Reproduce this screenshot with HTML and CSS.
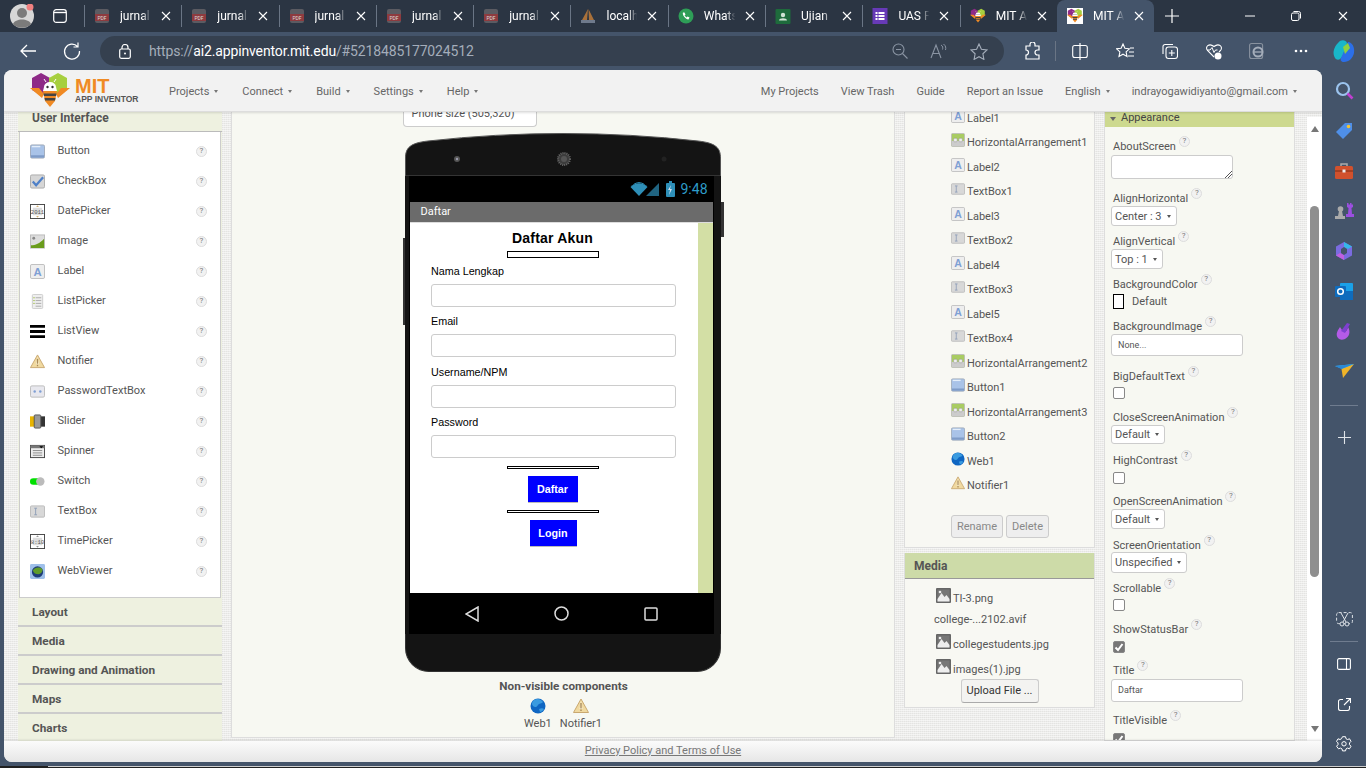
FILE: index.html
```html
<!DOCTYPE html>
<html lang="en">

<head>
    <meta charset="UTF-8">
    <title>MIT App Inventor</title>
    <link rel="stylesheet" href="styles.css">
</head>

<body>
    <svg class="defs" width="0" height="0">
        <defs>
            <symbol id="x" viewBox="0 0 10 10"><path d="M1 1l8 8M9 1l-8 8" fill="none" stroke="#fff" stroke-width="1.1"/></symbol>
            <symbol id="pdf" viewBox="0 0 14 16"><rect y="1" width="14" height="14" rx="2" fill="#5b5b62"/><rect y="6" width="14" height="7" fill="#8e3b3f"/><text x="7" y="12" font-size="5" fill="#ddd" text-anchor="middle" font-family="Roboto">PDF</text></symbol>
            <symbol id="hexlogo" viewBox="0 0 40 36">
                <path d="M11 0l9 5v12l-9 5-9-5V5z" fill="#8e2a87"/>
                <path d="M28 0l9 5v12l-9 5-9-5V5z" fill="#a7cf3f"/>
                <path d="M0 15h9l5 6-2 4zM40 15h-9l-5 6 2 4z" fill="#f08a24"/>
                <path d="M14 14a6 5 0 0 1 12 0l1 4H13z" fill="#fff"/>
                <circle cx="17.500" cy="14" r="1.200" fill="#333"/><circle cx="22.500" cy="14" r="1.200" fill="#333"/>
                <path d="M13 18h14l-2 10-5 6-5-6z" fill="#f08a24"/>
                <path d="M13.500 20.500h13l-.5 2.500h-12zM14.500 25h11l-.5 2.500h-10z" fill="#444"/>
                <path d="M16 9l-2-3M24 9l2-3" stroke="#fff" stroke-width="1"/>
            </symbol>
            <symbol id="i-button" viewBox="0 0 16 16"><rect x=".5" y="1" width="15" height="14" rx="1.500" fill="#a9c3e8" stroke="#9fa9b8"/><rect x="1" y="12" width="14" height="2.500" fill="#7f9cc8"/><rect x="2" y="2" width="9" height="1.500" fill="#e4eefa"/></symbol>
            <symbol id="i-check" viewBox="0 0 16 16"><rect x=".5" y="1" width="15" height="14" rx="1.500" fill="#d6d6d6" stroke="#aaa"/><path d="M3 8l3.500 4L14 3.500" fill="none" stroke="#4f80c8" stroke-width="2.400"/></symbol>
            <symbol id="i-date" viewBox="0 0 16 16"><rect x=".5" y=".5" width="15" height="15" fill="#fff" stroke="#444"/><rect x="3" y="4" width="10" height="8" fill="#ddd"/><text x="8" y="10.500" font-size="6" text-anchor="middle" fill="#555" font-family="Liberation Mono">2011</text><path d="M6.500 3L8 1.500 9.500 3zM6.500 13L8 14.500 9.500 13z" fill="#c89a4a"/></symbol>
            <symbol id="i-image" viewBox="0 0 16 16"><rect x=".5" y="1" width="15" height="14" fill="#ddd" stroke="#bbb"/><path d="M1 15v-3c5 0 9-2 14-7v10z" fill="#6a9c1c"/><circle cx="4" cy="4.500" r="1.500" fill="#888"/></symbol>
            <symbol id="i-label" viewBox="0 0 16 16"><rect x=".5" y=".5" width="15" height="15" rx="1.500" fill="#eee" stroke="#bbb"/><text x="8" y="12.500" font-size="12" font-weight="700" text-anchor="middle" fill="#7f9fd4" font-family="Liberation Sans">A</text></symbol>
            <symbol id="i-list" viewBox="0 0 16 16"><rect x="2.500" y=".5" width="11" height="15" rx="1" fill="#eee" stroke="#ccc"/><path d="M6 4h6M6 7h6M6 10h6M6 13h6" stroke="#aaa"/><path d="M3.500 4h1.500M3.500 7h1.500M3.500 10h1.500" stroke="#9bbb3a"/></symbol>
            <symbol id="i-listview" viewBox="0 0 16 16"><path d="M0 1h16v3H0zM0 6.500h16v3H0zM0 12h16v3H0z" fill="#000"/></symbol>
            <symbol id="i-notifier" viewBox="0 0 16 16"><path d="M8 1l7.500 13.500H.5z" fill="#f0d9a0" stroke="#c9a870"/><path d="M8 3l1.500 8h-3z" fill="#fff6dc"/><path d="M7.300 5h1.400v5.500H7.300zM7.300 11.500h1.400V13H7.300z" fill="#a88a58"/></symbol>
            <symbol id="i-pass" viewBox="0 0 16 16"><rect x=".5" y="2" width="15" height="12" rx="1.500" fill="#e8e8ee" stroke="#bbb"/><circle cx="5" cy="8" r="1.300" fill="#7f9fd4"/><circle cx="11" cy="8" r="1.300" fill="#7f9fd4"/></symbol>
            <symbol id="i-slider" viewBox="0 0 16 16"><rect y="2.500" width="6" height="11" fill="#e8b400"/><rect x="10" y="2.500" width="6" height="11" fill="#333"/><rect x="4.500" y="1" width="7" height="14" rx="1" fill="#999" stroke="#555"/></symbol>
            <symbol id="i-spinner" viewBox="0 0 16 16"><rect x=".5" y="1.500" width="15" height="13" fill="#eee" stroke="#444"/><path d="M.5 1.500h15v3H.5z" fill="#777"/><path d="M10 2.500h4L12 4.500z" fill="#000"/><path d="M3 7h10M3 9.500h10M3 12h10" stroke="#888"/></symbol>
            <symbol id="i-switch" viewBox="0 0 16 16"><rect y="4.500" width="12" height="7" rx="3.500" fill="#00e000"/><circle cx="11" cy="8" r="4.500" fill="#bbb"/></symbol>
            <symbol id="i-textbox" viewBox="0 0 16 16"><rect x=".5" y="2" width="15" height="12" rx="1" fill="#d8d8d8" stroke="#bbb"/><path d="M4.500 4.500h3M4.500 11.500h3M6 4.500v7" stroke="#8f9fb8"/></symbol>
            <symbol id="i-time" viewBox="0 0 16 16"><rect x=".5" y=".5" width="15" height="15" fill="#fff" stroke="#444"/><rect x="3" y="4" width="10" height="8" fill="#ddd"/><text x="8" y="10.500" font-size="6" text-anchor="middle" fill="#555" font-family="Liberation Mono">8:10</text><path d="M6.500 3L8 1.500 9.500 3zM6.500 13L8 14.500 9.500 13z" fill="#777"/></symbol>
            <symbol id="i-web" viewBox="0 0 16 16"><rect width="16" height="16" rx="1.500" fill="#9fc0ea"/><circle cx="8" cy="8.500" r="6" fill="#1f3d7a"/><path d="M3 7c2-4 7-4 10-2 1 3-1 5-4 6-3 0-5-1-6-4z" fill="#5e9c2a"/></symbol>
            <symbol id="i-arr" viewBox="0 0 16 16"><rect x=".5" y=".5" width="15" height="15" rx="1.500" fill="#a9cc62" stroke="#bbb"/><rect x="1" y="9" width="14" height="6" fill="#ccc"/><rect x="3" y="6" width="4" height="4" rx="1" fill="#eee" stroke="#888" stroke-width=".5"/><rect x="9" y="6" width="4" height="4" rx="1" fill="#eee" stroke="#888" stroke-width=".5"/></symbol>
            <symbol id="i-globe" viewBox="0 0 16 16"><circle cx="8" cy="8" r="7.500" fill="#0f66c2"/><path d="M4 2c3-2 7-1 9 2-1 2-4 1-5 3s-3 3-5 1-1-4 1-6z" fill="#3a9be0"/><path d="M9 11c2-1 4-1 5 0-1 2-3 3-4 3z" fill="#3a9be0"/></symbol>
            <symbol id="i-media" viewBox="0 0 15 15"><rect width="15" height="15" rx="1" fill="#666"/><rect x="1.500" y="1.500" width="12" height="12" fill="#777"/><path d="M1.500 11l4-6 3 4 2-2 3 4v2.500h-12z" fill="#eee"/><circle cx="4" cy="4" r="1.300" fill="#eee"/></symbol>
        </defs>
    </svg>

    <div class="tabstrip">
        <div class="strip-left">
            <svg class="avatar" width="24" height="24" viewBox="0 0 24 24"><circle cx="12" cy="12" r="12" fill="#d7d7d7"/><circle cx="12" cy="9" r="5" fill="#7b7b7b"/><path d="M3 20c2-6 16-6 18 0-4 5-14 5-18 0z" fill="#7b7b7b"/><circle cx="20" cy="3" r="3.500" fill="#f08080"/></svg>
            <svg class="tabs-icon" width="14" height="14" viewBox="0 0 14 14"><rect x=".7" y=".7" width="12.600" height="12.600" rx="2.500" fill="none" stroke="#fff" stroke-width="1.200"/><path d="M.7 3.500h12.600" stroke="#fff" stroke-width="1.400"/></svg>
        </div>
        <div class="tab"><svg class="tab-fav" width="14" height="16"><use href="#pdf"/></svg><span class="tab-text">jurnal</span><svg class="tab-x" width="10" height="10"><use href="#x"/></svg></div>
        <div class="tab"><svg class="tab-fav" width="14" height="16"><use href="#pdf"/></svg><span class="tab-text">jurnal</span><svg class="tab-x" width="10" height="10"><use href="#x"/></svg></div>
        <div class="tab"><svg class="tab-fav" width="14" height="16"><use href="#pdf"/></svg><span class="tab-text">jurnal</span><svg class="tab-x" width="10" height="10"><use href="#x"/></svg></div>
        <div class="tab"><svg class="tab-fav" width="14" height="16"><use href="#pdf"/></svg><span class="tab-text">jurnal</span><svg class="tab-x" width="10" height="10"><use href="#x"/></svg></div>
        <div class="tab"><svg class="tab-fav" width="14" height="16"><use href="#pdf"/></svg><span class="tab-text">jurnal</span><svg class="tab-x" width="10" height="10"><use href="#x"/></svg></div>
        <div class="tab"><svg class="tab-fav" width="14" height="16" viewBox="0 0 14 16"><path d="M7 1L1 12h5zM7.500 1L13 12H8z" fill="#a8703a"/><path d="M0 12h14v3H0z" fill="#6f7a8c"/></svg><span class="tab-text">localh</span><svg class="tab-x" width="10" height="10"><use href="#x"/></svg></div>
        <div class="tab"><svg class="tab-fav" width="16" height="16" viewBox="0 0 16 16"><circle cx="8" cy="8" r="7.500" fill="#2e9e57"/><path d="M5 4.500c-1 2 2 6.500 5.500 7l1-2-2-1-1 1-2-2 1-1-1-2z" fill="#fff"/></svg><span class="tab-text">Whats</span><svg class="tab-x" width="10" height="10"><use href="#x"/></svg></div>
        <div class="tab"><svg class="tab-fav" width="15" height="15" viewBox="0 0 15 15"><rect width="15" height="15" rx="1" fill="#1e6b3c"/><circle cx="7.500" cy="6" r="2.200" fill="#cfe3d4"/><path d="M3.500 11.500c0-3 8-3 8 0z" fill="#cfe3d4"/></svg><span class="tab-text">Ujian</span><svg class="tab-x" width="10" height="10"><use href="#x"/></svg></div>
        <div class="tab"><svg class="tab-fav" width="15" height="16" viewBox="0 0 15 16"><rect width="15" height="16" fill="#673ab7"/><path d="M3 4h2v2H3zM6 4h6v2H6zM3 7h2v2H3zM6 7h6v2H6zM3 10h2v2H3zM6 10h6v2H6z" fill="#fff"/></svg><span class="tab-text">UAS P</span><svg class="tab-x" width="10" height="10"><use href="#x"/></svg></div>
        <div class="tab"><svg class="tab-fav" width="16" height="16"><use href="#hexlogo"/></svg><span class="tab-text">MIT A</span><svg class="tab-x" width="10" height="10"><use href="#x"/></svg></div>
        <div class="tab tab-active"><svg class="tab-fav" width="16" height="16"><rect width="16" height="16" fill="#fff"/><use href="#hexlogo"/></svg><span class="tab-text">MIT A</span><svg class="tab-x" width="10" height="10"><use href="#x"/></svg></div>
        <svg class="tab-plus" width="14" height="14" viewBox="0 0 14 14"><path d="M7 0v14M0 7h14" stroke="#fff" stroke-width="1.200"/></svg>
        <div class="win-controls">
            <div class="win-btn"><svg width="10" height="10" viewBox="0 0 10 10"><path d="M0 5h10" stroke="#fff"/></svg></div>
            <div class="win-btn"><svg width="10" height="10" viewBox="0 0 10 10"><rect x=".5" y="2" width="7.500" height="7.500" rx="1.500" fill="none" stroke="#fff"/><path d="M2.500.5h5a2 2 0 0 1 2 2v5" fill="none" stroke="#fff"/></svg></div>
            <div class="win-btn"><svg width="10" height="10"><use href="#x"/></svg></div>
        </div>
    </div>

    <div class="toolbar">
        <svg class="tool-nav" width="20" height="20" viewBox="0 0 20 20"><path d="M18 10H3M9 4l-6 6 6 6" fill="none" stroke="#fff" stroke-width="1.300"/></svg>
        <svg class="tool-nav tool-reload" width="20" height="20" viewBox="0 0 20 20"><path d="M15.500 5.500A7.500 7.500 0 1 0 17.500 10M16 1.500v4.500h-4.500" fill="none" stroke="#fff" stroke-width="1.200"/></svg>
        <div class="address">
            <svg class="lock" width="12" height="15" viewBox="0 0 12 15"><rect x=".7" y="5" width="10.600" height="9.300" rx="1.500" fill="none" stroke="#fff" stroke-width="1.200"/><path d="M3 5V3.500a3 3 0 0 1 6 0V5" fill="none" stroke="#fff" stroke-width="1.200"/><circle cx="6" cy="9.500" r="1" fill="#fff"/></svg>
            <span class="url"><span class="url-dim">https://</span>ai2.appinventor.mit.edu<span class="url-dim">/#5218485177024512</span></span>
            <div class="address-icons">
                <svg width="16" height="16" viewBox="0 0 16 16"><circle cx="6.500" cy="6.500" r="5.500" fill="none" stroke="#8a94a3" stroke-width="1.100"/><path d="M4 6.500h5M10.500 10.500l5 5" stroke="#8a94a3" stroke-width="1.100"/></svg>
                <svg width="18" height="16" viewBox="0 0 18 16"><path d="M1 15L6 2l5 13M3 10.500h6" fill="none" stroke="#8a94a3" stroke-width="1.100"/><path d="M11 2c2 1 2 3 1.500 4.500M13.500 1c2.500 2 2.500 4 2 6" fill="none" stroke="#8a94a3"/></svg>
                <svg width="18" height="17" viewBox="0 0 18 17"><path d="M9 1l2.400 5.200 5.600.7-4.100 3.900 1 5.600L9 13.700l-4.900 2.700 1-5.600L1 6.900l5.600-.7z" fill="none" stroke="#a4adba" stroke-width="1.100"/></svg>
            </div>
        </div>
        <div class="tool-slot tool-first"><svg width="17" height="18" viewBox="0 0 17 18"><path d="M6 2.500a2.500 2.500 0 0 1 5 0V4h4v4h-1.500a2.500 2.500 0 0 0 0 5H15v4H2v-4a2.500 2.500 0 0 0 0-5V4h4z" fill="none" stroke="#fff" stroke-width="1.200"/></svg></div>
        <div class="tool-sep"></div>
        <div class="tool-slot tool-wide"><svg width="16" height="17" viewBox="0 0 16 17"><rect x=".7" y="2.500" width="14.600" height="12" rx="2" fill="none" stroke="#fff" stroke-width="1.100"/><path d="M8 0v17" stroke="#fff" stroke-width="1.200"/></svg></div>
        <div class="tool-slot tool-wide"><svg width="18" height="17" viewBox="0 0 18 17"><path d="M7 1l1.900 4.200 4.500.6-3.300 3.100.9 4.600L7 11.200l-4 2.300.9-4.600L.6 5.800l4.500-.6z" fill="none" stroke="#fff" stroke-width="1.100"/><path d="M14 5h4M13 9h5M12 13h6" stroke="#fff"/></svg></div>
        <div class="tool-slot tool-wide"><svg width="16" height="18" viewBox="0 0 16 18"><rect x="4" y="5" width="11.500" height="11.500" rx="2.500" fill="none" stroke="#fff" stroke-width="1.100"/><path d="M9.800 8v6M6.800 11h6M11 2.500H3a2 2 0 0 0-2 2V12" fill="none" stroke="#fff" stroke-width="1.100"/></svg></div>
        <div class="tool-slot tool-narrow"><svg width="18" height="18" viewBox="0 0 18 18"><path d="M9 15L2.500 8.500C-.5 5 4 .5 9 4.500c5-4 9.500.5 6.500 4L14 10" fill="none" stroke="#fff" stroke-width="1.100"/><path d="M2 8h3l2-2.500 2 5 1.500-2.500h2" fill="none" stroke="#fff"/><circle cx="13" cy="14" r="3.500" fill="#fff"/></svg></div>
        <div class="tool-slot"><svg width="16" height="18" viewBox="0 0 16 18"><rect x=".6" y="1.500" width="13" height="15" rx="2" fill="none" stroke="#88929f" stroke-width="1.100"/><circle cx="9" cy="10" r="4.500" fill="none" stroke="#a4adba" stroke-width="2"/><path d="M5 10h8" stroke="#a4adba" stroke-width="1.300"/></svg></div>
        <div class="tool-slot tool-narrow"><svg width="14" height="4" viewBox="0 0 14 4"><circle cx="2" cy="2" r="1.300" fill="#fff"/><circle cx="7" cy="2" r="1.300" fill="#fff"/><circle cx="12" cy="2" r="1.300" fill="#fff"/></svg></div>
        <div class="tool-slot"><svg width="24" height="24" viewBox="0 0 24 24"><path d="M6 4c3-4 8-3 9 0l-4 12c-2 5-6 6-8 3-3-5-1-11 3-15z" fill="#19b6c9"/><path d="M16 3c4 0 7 5 6 11-1 5-5 9-10 9-3 0-4-2-3-4z" fill="#2c6fe8"/><path d="M11 8l5-4 2 5-5 6z" fill="#8fd13f"/></svg></div>
    </div>

    <div class="main">
        <div class="page">
            <header class="appbar">
                <div class="logo">
                    <svg class="logo-mark" width="40" height="36"><use href="#hexlogo"/></svg>
                    <div class="logo-text">
                        <div class="logo-mit">MIT</div>
                        <div class="logo-sub">APP INVENTOR</div>
                    </div>
                </div>
                <nav class="nav">
                    <span class="nav-item nav-menu">Projects</span>
                    <span class="nav-item nav-menu">Connect</span>
                    <span class="nav-item nav-menu">Build</span>
                    <span class="nav-item nav-menu">Settings</span>
                    <span class="nav-item nav-menu">Help</span>
                </nav>
                <nav class="nav nav-right">
                    <span class="nav-item">My Projects</span>
                    <span class="nav-item">View Trash</span>
                    <span class="nav-item">Guide</span>
                    <span class="nav-item">Report an Issue</span>
                    <span class="nav-item nav-menu">English</span>
                    <span class="nav-item nav-menu">indrayogawidiyanto@gmail.com</span>
                </nav>
            </header>

            <div class="workspace">
                <section class="palette">
                    <div class="palette-head">User Interface</div>
                    <ul class="palette-list">
                        <li><svg class="pal-icon"><use href="#i-button"/></svg><span class="pal-name">Button</span><span class="pal-help">?</span></li>
                        <li><svg class="pal-icon"><use href="#i-check"/></svg><span class="pal-name">CheckBox</span><span class="pal-help">?</span></li>
                        <li><svg class="pal-icon"><use href="#i-date"/></svg><span class="pal-name">DatePicker</span><span class="pal-help">?</span></li>
                        <li><svg class="pal-icon"><use href="#i-image"/></svg><span class="pal-name">Image</span><span class="pal-help">?</span></li>
                        <li><svg class="pal-icon"><use href="#i-label"/></svg><span class="pal-name">Label</span><span class="pal-help">?</span></li>
                        <li><svg class="pal-icon"><use href="#i-list"/></svg><span class="pal-name">ListPicker</span><span class="pal-help">?</span></li>
                        <li><svg class="pal-icon"><use href="#i-listview"/></svg><span class="pal-name">ListView</span><span class="pal-help">?</span></li>
                        <li><svg class="pal-icon"><use href="#i-notifier"/></svg><span class="pal-name">Notifier</span><span class="pal-help">?</span></li>
                        <li><svg class="pal-icon"><use href="#i-pass"/></svg><span class="pal-name">PasswordTextBox</span><span class="pal-help">?</span></li>
                        <li><svg class="pal-icon"><use href="#i-slider"/></svg><span class="pal-name">Slider</span><span class="pal-help">?</span></li>
                        <li><svg class="pal-icon"><use href="#i-spinner"/></svg><span class="pal-name">Spinner</span><span class="pal-help">?</span></li>
                        <li><svg class="pal-icon"><use href="#i-switch"/></svg><span class="pal-name">Switch</span><span class="pal-help">?</span></li>
                        <li><svg class="pal-icon"><use href="#i-textbox"/></svg><span class="pal-name">TextBox</span><span class="pal-help">?</span></li>
                        <li><svg class="pal-icon"><use href="#i-time"/></svg><span class="pal-name">TimePicker</span><span class="pal-help">?</span></li>
                        <li><svg class="pal-icon"><use href="#i-web"/></svg><span class="pal-name">WebViewer</span><span class="pal-help">?</span></li>
                    </ul>
                    <div class="pal-cat">Layout</div>
                    <div class="pal-cat">Media</div>
                    <div class="pal-cat">Drawing and Animation</div>
                    <div class="pal-cat">Maps</div>
                    <div class="pal-cat">Charts</div>
                </section>

                <section class="viewer">
                    <div class="viewer-inner">
                        <div class="size-box"><span class="size-text">Phone size (505,320)</span></div>
                        <div class="phone">
                            <svg class="phone-top" width="316" height="43" viewBox="0 0 316 43">
                                <path d="M.5 43V25C.5 15 5 10 23 8 Q90 .5 158 .5 Q226 .5 293 8C311 10 315.500 15 315.500 25V43z" fill="#141414" stroke="#555"/>
                                <circle cx="52" cy="26" r="3" fill="#555"/><circle cx="52" cy="26" r="1.200" fill="#99a"/>
                                <circle cx="159" cy="26" r="6" fill="#3c3c3c" stroke="#666" stroke-width="2" stroke-dasharray="1 1"/>
                                <circle cx="159" cy="26" r="3" fill="#555"/>
                                <circle cx="259" cy="26" r="2.500" fill="#222"/>
                            </svg>
                            <div class="phone-status">
                                <svg width="45" height="16" viewBox="0 0 45 16">
                                    <path d="M9 15L.5 6c5-5 12-5 17 0z" fill="#2e8fb8"/>
                                    <path d="M3.500 3.500c4-2.500 7-2.500 11 0" fill="none" stroke="#2e8fb8"/>
                                    <path d="M16 15L29 2v13z" fill="#2e8fb8" opacity=".7"/>
                                    <rect x="36" y="2" width="9" height="14" rx="1" fill="#2e8fb8"/><rect x="39" y="0" width="3" height="2" fill="#2e8fb8"/>
                                    <path d="M41 4l-3 5h2l-1 5 3-6h-2z" fill="#cde"/>
                                </svg>
                                <span class="phone-time">9:48</span>
                            </div>
                            <div class="phone-screen">
                                <div class="phone-title">Daftar</div>
                                <div class="phone-body">
                                    <div class="form">
                                        <div class="form-heading">Daftar Akun</div>
                                        <div class="form-rule form-rule-tall"></div>
                                        <div class="form-label form-label-first">Nama Lengkap</div>
                                        <div class="form-input"></div>
                                        <div class="form-label">Email</div>
                                        <div class="form-input"></div>
                                        <div class="form-label form-label-wide">Username/NPM</div>
                                        <div class="form-input"></div>
                                        <div class="form-label">Password</div>
                                        <div class="form-input"></div>
                                        <div class="form-rule form-rule-first"></div>
                                        <div class="form-btn form-btn-daftar">Daftar</div>
                                        <div class="form-rule"></div>
                                        <div class="form-btn form-btn-login">Login</div>
                                    </div>
                                    <div class="phone-edge"></div>
                                </div>
                                <div class="phone-nav">
                                    <svg width="14" height="16" viewBox="0 0 14 16"><path d="M13 1v14L1 8z" fill="none" stroke="#ddd" stroke-width="1.500"/></svg>
                                    <svg width="15" height="15" viewBox="0 0 15 15"><circle cx="7.500" cy="7.500" r="6.500" fill="none" stroke="#ddd" stroke-width="1.500"/></svg>
                                    <svg width="14" height="14" viewBox="0 0 14 14"><rect x="1" y="1" width="12" height="12" rx="1" fill="none" stroke="#ddd" stroke-width="1.500"/></svg>
                                </div>
                            </div>
                            <div class="phone-chin"></div>
                        </div>
                        <div class="nonvisible-title">Non-visible components</div>
                        <div class="nonvisible">
                            <div class="nv-item"><svg width="16" height="16"><use href="#i-globe"/></svg><span>Web1</span></div>
                            <div class="nv-item"><svg width="16" height="16"><use href="#i-notifier"/></svg><span>Notifier1</span></div>
                        </div>
                    </div>
                </section>

                <div class="tree-col">
                    <section class="tree">
                        <ul class="tree-list">
                            <li><svg class="tree-icon"><use href="#i-label"/></svg>Label1</li>
                            <li><svg class="tree-icon"><use href="#i-arr"/></svg>HorizontalArrangement1</li>
                            <li><svg class="tree-icon"><use href="#i-label"/></svg>Label2</li>
                            <li><svg class="tree-icon"><use href="#i-textbox"/></svg>TextBox1</li>
                            <li><svg class="tree-icon"><use href="#i-label"/></svg>Label3</li>
                            <li><svg class="tree-icon"><use href="#i-textbox"/></svg>TextBox2</li>
                            <li><svg class="tree-icon"><use href="#i-label"/></svg>Label4</li>
                            <li><svg class="tree-icon"><use href="#i-textbox"/></svg>TextBox3</li>
                            <li><svg class="tree-icon"><use href="#i-label"/></svg>Label5</li>
                            <li><svg class="tree-icon"><use href="#i-textbox"/></svg>TextBox4</li>
                            <li><svg class="tree-icon"><use href="#i-arr"/></svg>HorizontalArrangement2</li>
                            <li><svg class="tree-icon"><use href="#i-button"/></svg>Button1</li>
                            <li><svg class="tree-icon"><use href="#i-arr"/></svg>HorizontalArrangement3</li>
                            <li><svg class="tree-icon"><use href="#i-button"/></svg>Button2</li>
                            <li><svg class="tree-icon"><use href="#i-globe"/></svg>Web1</li>
                            <li><svg class="tree-icon"><use href="#i-notifier"/></svg>Notifier1</li>
                        </ul>
                        <div class="tree-actions">
                            <span class="tree-btn tree-btn-rename">Rename</span>
                            <span class="tree-btn tree-btn-delete">Delete</span>
                        </div>
                    </section>
                    <section class="media">
                        <div class="media-head">Media</div>
                        <div class="media-row media-row-first"><svg class="media-icon"><use href="#i-media"/></svg>TI-3.png</div>
                        <div class="media-row media-row-plain">college-...2102.avif</div>
                        <div class="media-row"><svg class="media-icon"><use href="#i-media"/></svg>collegestudents.jpg</div>
                        <div class="media-row"><svg class="media-icon"><use href="#i-media"/></svg>images(1).jpg</div>
                        <div class="upload-btn">Upload File ...</div>
                    </section>
                </div>

                <section class="props">
                    <div class="props-head"><span class="props-caret"></span><span class="props-title">Appearance</span></div>
                    <div class="prop h52 prop-top"><div class="prop-label">AboutScreen<i class="help">?</i></div><div class="textarea"><svg width="8" height="8" viewBox="0 0 8 8"><path d="M1 8l7-7M4 8l4-4" stroke="#555"/></svg></div></div>
                    <div class="prop h43"><div class="prop-label">AlignHorizontal<i class="help">?</i></div><div class="select">Center : 3</div></div>
                    <div class="prop h43"><div class="prop-label">AlignVertical<i class="help">?</i></div><div class="select">Top : 1</div></div>
                    <div class="prop h42"><div class="prop-label">BackgroundColor<i class="help">?</i></div><div class="color-row"><span class="swatch"></span>Default</div></div>
                    <div class="prop h50"><div class="prop-label">BackgroundImage<i class="help">?</i></div><div class="textinput textinput-none">None...</div></div>
                    <div class="prop h41"><div class="prop-label">BigDefaultText<i class="help">?</i></div><div class="check"></div></div>
                    <div class="prop h43"><div class="prop-label">CloseScreenAnimation<i class="help">?</i></div><div class="select select-short">Default</div></div>
                    <div class="prop h41"><div class="prop-label">HighContrast<i class="help">?</i></div><div class="check check-low"></div></div>
                    <div class="prop h44"><div class="prop-label">OpenScreenAnimation<i class="help">?</i></div><div class="select">Default</div></div>
                    <div class="prop h43"><div class="prop-label">ScreenOrientation<i class="help">?</i></div><div class="select select-tight">Unspecified</div></div>
                    <div class="prop h41"><div class="prop-label">Scrollable<i class="help">?</i></div><div class="check"></div></div>
                    <div class="prop h41"><div class="prop-label">ShowStatusBar<i class="help">?</i></div><div class="check check-low check-on"><svg width="10" height="10" viewBox="0 0 10 10"><path d="M1.500 5.500l2.500 2.500 4.500-6" fill="none" stroke="#fff" stroke-width="2"/></svg></div></div>
                    <div class="prop h50"><div class="prop-label">Title<i class="help">?</i></div><div class="textinput textinput-title">Daftar</div></div>
                    <div class="prop h50"><div class="prop-label">TitleVisible<i class="help">?</i></div><div class="check check-low2 check-on"><svg width="10" height="10" viewBox="0 0 10 10"><path d="M1.500 5.500l2.500 2.500 4.500-6" fill="none" stroke="#fff" stroke-width="2"/></svg></div></div>
                </section>

                <div class="scrollbar">
                    <span class="scroll-up"></span>
                    <span class="scroll-thumb"></span>
                    <span class="scroll-down"></span>
                </div>
            </div>

            <footer class="foot"><a class="foot-link" href="#">Privacy Policy and Terms of Use</a></footer>
        </div>

        <aside class="sidebar">
            <div class="side-slot"><svg width="19" height="20" viewBox="0 0 19 20"><circle cx="8" cy="8" r="6" fill="none" stroke="#9cc4ee" stroke-width="2.200"/><path d="M12.500 12.500l5 5" stroke="#c03fd0" stroke-width="2.600"/></svg></div>
            <div class="side-slot"><svg width="18" height="18" viewBox="0 0 18 18"><path d="M1 10L10 1h7v7l-9 9z" fill="#4f8fe8"/><circle cx="13.500" cy="4.500" r="1.800" fill="#f4c430"/></svg></div>
            <div class="side-slot"><svg width="18" height="16" viewBox="0 0 18 16"><path d="M6 3V1h6v2" fill="none" stroke="#aaa" stroke-width="1.500"/><rect y="3" width="18" height="13" rx="1.500" fill="#d1512d"/><path d="M0 8h18" stroke="#7d2e17"/><rect x="7.500" y="6.500" width="3" height="3" fill="#eee"/></svg></div>
            <div class="side-slot"><svg width="19" height="18" viewBox="0 0 19 18"><path d="M12 1h1.500v1.500h1.500V1h1.500v1.500H18V1v4l-1.500 1 .5 6h2v3h-8v-3h2l.5-6L12 5z" fill="#9b4fe0"/><circle cx="5.500" cy="7" r="2.800" fill="#aaa"/><path d="M4 9h3l1 5h2v3H0v-3h3z" fill="#aaa"/></svg></div>
            <div class="side-slot"><svg width="18" height="18" viewBox="0 0 18 18"><path d="M9 0l8 4.500v9L9 18l-8-4.500v-9z" fill="#7a6be0"/><path d="M9 0l8 4.500-4 2.500-4-2z" fill="#35b6e8"/><path d="M1 13.500L5 11l4 2 0 5z" fill="#c05fe0"/><path d="M6 7l3-2 3 2v4l-3 2-3-2z" fill="#44546a"/></svg></div>
            <div class="side-slot"><svg width="18" height="17" viewBox="0 0 18 17"><rect x="5" y="0" width="13" height="17" rx="1" fill="#1aa1e8"/><rect x="5" y="8" width="13" height="9" fill="#0f6cbd"/><rect x="0" y="3" width="11" height="11" rx="1" fill="#0f6cbd"/><circle cx="5.500" cy="8.500" r="2.800" fill="none" stroke="#fff" stroke-width="1.500"/></svg></div>
            <div class="side-slot"><svg width="18" height="18" viewBox="0 0 18 18"><path d="M3 16C0 12 3 8 5 5l2 3c2 3 5 2 6-3 3 5 1 10-3 12-3 1-5 1-7-1z" fill="#b45be8"/><path d="M6 9l6-8 3 1-5 9z" fill="#7e3fd0"/></svg></div>
            <div class="side-slot"><svg width="19" height="14" viewBox="0 0 19 14"><path d="M0 2l19-2-9 6z" fill="#3fb7e8"/><path d="M19 0L8 14 6.500 5z" fill="#f0b429"/><path d="M0 2l6.500 3L19 0z" fill="#2a88d8"/></svg></div>
            <div class="side-sep side-sep-top"></div>
            <div class="side-slot"><svg width="13" height="13" viewBox="0 0 13 13"><path d="M6.500 0v13M0 6.500h13" stroke="#dfe3e8" stroke-width="1.100"/></svg></div>
            <div class="side-fill"></div>
            <div class="side-slot"><svg width="17" height="15" viewBox="0 0 17 15"><rect x=".6" y=".6" width="15.800" height="11" rx="2" fill="none" stroke="#dfe3e8" stroke-dasharray="3 2"/><path d="M5 1l5 9M12 1l-5 9" stroke="#dfe3e8"/><circle cx="6" cy="12" r="2" fill="#44546a" stroke="#dfe3e8"/><circle cx="11" cy="12" r="2" fill="#44546a" stroke="#dfe3e8"/></svg></div>
            <div class="side-sep"></div>
            <div class="side-slot"><svg width="14" height="12" viewBox="0 0 14 12"><rect x=".6" y=".6" width="12.800" height="10.800" rx="1.500" fill="none" stroke="#fff" stroke-width="1.100"/><path d="M9.500 1v10" stroke="#fff" stroke-width="1.100"/></svg></div>
            <div class="side-slot"><svg width="13" height="13" viewBox="0 0 13 13"><path d="M5 1.500H2.500a2 2 0 0 0-2 2v7a2 2 0 0 0 2 2h7a2 2 0 0 0 2-2V8M6 7l6.500-6.500M8 .5h4.500V5" fill="none" stroke="#fff" stroke-width="1.100"/></svg></div>
            <div class="side-slot"><svg width="16" height="16" viewBox="0 0 16 16"><path d="M6.500.7h3l.5 2 1.500.8 2-.7 1.500 2.600-1.500 1.500v1.800l1.500 1.500-1.500 2.600-2-.7-1.500.8-.5 2h-3l-.5-2-1.500-.8-2 .7L.5 10.200 2 8.700V6.900L.5 5.400 2 2.800l2 .7 1.500-.8z" fill="none" stroke="#fff" stroke-width="1"/><circle cx="8" cy="7.800" r="2.200" fill="none" stroke="#fff"/></svg></div>
        </aside>
    </div>
    <div class="taskbar"><span class="taskbar-lit"></span></div>
</body>

</html>
```

FILE: styles.css
```css
/* reset start */
* {
    padding: 0;
    margin: 0;
    box-sizing: border-box;
}

html,
body {
    width: 1366px;
    height: 768px;
    overflow: hidden;
}

body {
    background-color: #44546a;
    font-family: Roboto, "Liberation Sans", sans-serif;
    font-size: 11px;
    color: #555;
}

li {
    list-style: none;
}

svg {
    display: block;
    flex: none;
}

.defs {
    position: absolute;
}

/* reset end */


/* browser tabs */
.tabstrip {
    height: 32px;
    background-color: #2b3543;
    display: flex;
    align-items: center;
}

.strip-left {
    width: 84px;
    height: 32px;
    display: flex;
    align-items: center;
    padding-left: 10px;
}

.tabs-icon {
    margin-left: 19px;
}

.tab {
    width: 97.3px;
    height: 32px;
    display: flex;
    align-items: center;
    padding-left: 10px;
    color: #fff;
    font-size: 12px;
    background-image: linear-gradient(#6a7585, #6a7585);
    background-size: 1px 22px;
    background-position: 0 5px;
    background-repeat: no-repeat;
}

.tab-fav {
    width: 16px;
}

.tab-text {
    width: 34px;
    margin-left: 10px;
    white-space: nowrap;
    -webkit-mask-image: linear-gradient(90deg, #000 65%, transparent 92%);
    mask-image: linear-gradient(90deg, #000 65%, transparent 92%);
}

.tab-x {
    margin-left: 7px;
}

.tab-active {
    background-image: none;
    background-color: #44546a;
    border-radius: 8px 8px 0 0;
}

.tab-plus {
    margin-left: 11px;
}

.win-controls {
    margin-left: auto;
    display: flex;
}

.win-btn {
    width: 46.5px;
    height: 32px;
    display: flex;
    align-items: center;
    justify-content: center;
}

/* browser toolbar */
.toolbar {
    height: 38px;
    display: flex;
    align-items: center;
    padding-left: 18px;
    background-color: #44546a;
}

.tool-reload {
    margin-left: 24px;
}

.address {
    width: 905px;
    height: 30px;
    margin-left: 18px;
    border-radius: 15px;
    background-color: #35404f;
    display: flex;
    align-items: center;
    padding-left: 19px;
}

.url {
    margin-left: 18px;
    font-size: 14px;
    color: #fff;
    letter-spacing: -.01em;
}

.url-dim {
    color: #a4adba;
}

.address-icons {
    margin-left: auto;
    width: 96px;
    margin-right: 16px;
    display: flex;
    justify-content: space-between;
    align-items: center;
}

.tool-slot {
    width: 44px;
    height: 30px;
    display: flex;
    align-items: center;
    justify-content: center;
}

.tool-first {
    margin-left: 6px;
}

.tool-wide {
    width: 45px;
}

.tool-narrow {
    width: 43px;
}

.tool-sep {
    width: 1px;
    height: 20px;
    margin: 0 1px;
    background-color: #6a7585;
}

/* page */
.main {
    height: 696px;
    display: flex;
}

.page {
    width: 1318px;
    height: 692px;
    margin-left: 4px;
    display: flex;
    flex-direction: column;
    border-radius: 8px;
    overflow: hidden;
    background-color: #ececea;
    background-image: linear-gradient(rgba(255, 255, 255, .5) 1px, transparent 1px), linear-gradient(90deg, rgba(0, 0, 0, .035) 1px, transparent 1px);
    background-size: 2px 2px;
}

.appbar {
    height: 42px;
    flex: none;
    display: flex;
    align-items: center;
    padding-top: 1px;
    padding-right: 25px;
    background-color: #f2f2f2;
    border-bottom: 1px solid #ddd;
    position: relative;
    z-index: 2;
    box-shadow: 0 1px 2px rgba(0, 0, 0, .12);
}

.logo {
    width: 165px;
    padding-left: 26px;
    display: flex;
    align-items: center;
    flex: none;
}

.logo-text {
    margin-left: 5px;
    margin-top: -1px;
}

.logo-mit {
    font-family: "Liberation Sans", sans-serif;
    font-size: 20px;
    line-height: 16px;
    font-weight: 700;
    color: #f08a24;
}

.logo-sub {
    font-family: "Liberation Sans", sans-serif;
    font-size: 8.5px;
    line-height: 10px;
    font-weight: 700;
    color: #555;
    white-space: nowrap;
}

.nav {
    display: flex;
    gap: 24px;
    color: #666;
    white-space: nowrap;
}

.nav-right {
    margin-left: auto;
    gap: 22px;
}

.nav-menu::after {
    content: "";
    display: inline-block;
    margin-left: 5px;
    vertical-align: 2px;
    border-top: 3px solid #777;
    border-left: 2px solid transparent;
    border-right: 2px solid transparent;
}

.workspace {
    flex: 1;
    min-height: 0;
    display: grid;
    grid-template-columns: 204px 664px 191px 191px 1fr;
    column-gap: 9px;
    padding-left: 14px;
    overflow: hidden;
}

/* palette */
.palette {
    background-color: #eef1e0;
    overflow: hidden;
}

.palette-head {
    height: 20px;
    padding-left: 14px;
    font-size: 12px;
    line-height: 13px;
    font-weight: 700;
    border-bottom: 1px solid #bbb;
}

.palette-list {
    height: 466px;
    padding-top: 4px;
    background-color: #fff;
    border: 1px solid #ccc;
    border-top: none;
    margin: 0 1px 0 .5px;
}

.palette-list li {
    height: 30px;
    display: flex;
    align-items: center;
    padding-left: 10.5px;
    padding-right: 13px;
}

.pal-icon {
    width: 15px;
    height: 15px;
}

.pal-name {
    margin-left: 12.5px;
    flex: 1;
    margin-top: -1px;
}

.pal-help,
.help {
    width: 11px;
    height: 11px;
    border: 1.5px solid #ddd;
    border-radius: 50%;
    background-color: #f2f2f2;
    color: #777;
    font-size: 8px;
    font-style: normal;
    line-height: 8px;
    text-align: center;
    flex: none;
}

.pal-cat {
    height: 29px;
    padding-left: 14px;
    font-size: 11.8px;
    line-height: 29px;
    font-weight: 700;
    border-bottom: 2px solid #ccc;
}

/* viewer */
.viewer {
    width: 664px;
    height: 626px;
    background-color: #f7f8f2;
    border: 1px solid #ddd;
    border-top: none;
    display: flex;
    justify-content: center;
}

.viewer-inner {
    width: 321px;
    display: flex;
    flex-direction: column;
    align-items: center;
}

.size-box {
    width: 134px;
    height: 15px;
    align-self: flex-start;
    background-color: #fff;
    border: 1px solid #ccc;
    border-top: none;
    border-radius: 0 0 4px 4px;
    padding-left: 8px;
    overflow: hidden;
    white-space: nowrap;
}

.size-text {
    display: block;
    margin-top: -5px;
    line-height: 14px;
}

.phone {
    width: 316px;
    margin-top: 6px;
    position: relative;
    margin-left: -1px;
}

.phone::before,
.phone::after {
    content: "";
    position: absolute;
    background-color: #333;
}

.phone::before {
    left: -2px;
    top: 105px;
    width: 2px;
    height: 87px;
}

.phone::after {
    right: -3px;
    top: 69px;
    width: 3px;
    height: 35px;
}

.phone-status {
    height: 26px;
    margin: 0 7px 0 4px;
    background-color: #000;
    display: flex;
    align-items: center;
    justify-content: flex-end;
    padding-right: 6px;
    box-shadow: -4px 0 0 #141414, 7px 0 0 #141414;
}

.phone-time {
    margin-left: 6px;
    color: #2e9cc8;
    font-size: 14px;
}

.phone-screen {
    background-color: #000;
    margin: 0 7px 0 4px;
    box-shadow: -4px 0 0 #141414, 7px 0 0 #141414;
}

.phone-title {
    height: 21px;
    margin: 0 1px;
    padding-left: 11px;
    background-color: #6b6b6b;
    border-bottom: 1px solid #ddd;
    color: #fff;
    line-height: 19px;
}

.phone-body {
    height: 370px;
    margin: 0 1px;
    display: flex;
    background-color: #fff;
}

.phone-edge {
    width: 15px;
    background-color: #d3dfa5;
}

.form {
    width: 288px;
    display: flex;
    flex-direction: column;
    align-items: center;
    font-family: "Liberation Sans", sans-serif;
    font-size: 10.75px;
    color: #000;
}

.form-heading {
    margin-top: 6px;
    margin-right: 2px;
    font-size: 14px;
    line-height: 18px;
    font-weight: 700;
    letter-spacing: .2px;
}

.form-rule {
    width: 92px;
    height: 3px;
    margin-top: 7px;
    margin-right: 2px;
    border: 1px solid #000;
}

.form-rule-tall {
    height: 7px;
    margin-top: 4px;
}

.form-rule-first {
    margin-top: 8px;
}

.form-label {
    width: 245px;
    margin-top: 7px;
    line-height: 14px;
}

.form-label-first {
    margin-top: 6px;
}

.form-label-wide {
    margin-top: 8px;
}

.form-input {
    width: 245px;
    height: 23px;
    margin-top: 6px;
    border: 1px solid #ccc;
    border-radius: 3px;
}

.form-btn {
    height: 27px;
    margin-top: 7px;
    margin-right: 2px;
    background-color: #00f;
    border-bottom: 1px solid #bbb;
    color: #fff;
    font-weight: 700;
    line-height: 26px;
    text-align: center;
}

.form-btn-daftar {
    width: 50px;
}

.form-btn-login {
    width: 47px;
    margin-right: 1px;
}

.phone-nav {
    height: 41px;
    display: flex;
    align-items: center;
    padding: 0 56px 0 56px;
    justify-content: space-between;
}

.phone-chin {
    height: 38px;
    background-color: #141414;
    border: 1px solid #333;
    border-top: none;
    border-radius: 0 0 24px 24px;
}

.nonvisible-title {
    margin-top: 7px;
    margin-left: 1px;
    font-size: 11.7px;
    line-height: 14px;
    font-weight: 700;
}

.nonvisible {
    margin-top: 5px;
    display: flex;
    gap: 8px;
}

.nv-item {
    display: flex;
    flex-direction: column;
    align-items: center;
    gap: 4px;
    line-height: 12px;
}

/* component tree */
.tree-col {
    overflow: hidden;
}

.tree {
    height: 436px;
    background-color: #f8f8f3;
    border: 1px solid #ddd;
    border-top: none;
    overflow: hidden;
}

.tree-list {
    margin-top: -6.2px;
}

.tree-list li {
    height: 24.5px;
    display: flex;
    align-items: center;
    padding-left: 46px;
}

.tree-icon {
    width: 14px;
    height: 14px;
    margin-right: 2px;
    margin-bottom: 5px;
}

.tree-actions {
    margin-top: 17.4px;
    padding-left: 46px;
    display: flex;
    gap: 3px;
}

.tree-btn {
    height: 23px;
    background-color: #eee;
    border: 1px solid #ccc;
    border-radius: 3px;
    color: #888;
    line-height: 21px;
    text-align: center;
}

.tree-btn-rename {
    width: 52px;
}

.tree-btn-delete {
    width: 43px;
}

.media {
    margin-top: 5px;
    height: 155px;
    background-color: #f8f8f3;
    border: 1px solid #ddd;
    border-top: none;
}

.media-head {
    height: 26px;
    padding-left: 9px;
    background-color: #cddba8;
    border-bottom: 1px solid #999;
    font-size: 12px;
    font-weight: 700;
    line-height: 26px;
}

.media-row {
    height: 20px;
    margin-top: 5px;
    padding-left: 31px;
    display: flex;
    align-items: center;
}

.media-row-first {
    margin-top: 9px;
}

.media-row-plain {
    margin-top: 1px;
    padding-left: 29px;
}

.media-icon {
    width: 15px;
    height: 15px;
    margin-right: 2px;
    margin-bottom: 5px;
}

.upload-btn {
    width: 78px;
    height: 24px;
    margin: 0 auto;
    background-color: #f3f3f1;
    border: 1px solid #ccc;
    border-bottom-color: #aaa;
    border-radius: 3px;
    color: #333;
    line-height: 22px;
    text-align: center;
}

/* properties */
.props {
    background-color: #f7f8f2;
    border: 1px solid #ddd;
    border-top: none;
    padding-left: 8px;
    overflow: hidden;
}

.props-head {
    height: 15px;
    margin: 0 0 0 -8px;
    padding-left: 5px;
    background-color: #cdd98f;
    display: flex;
    align-items: flex-end;
    overflow: hidden;
}

.props-caret {
    width: 0;
    height: 0;
    margin-bottom: 6px;
    border-top: 4px solid #666;
    border-left: 3px solid transparent;
    border-right: 3px solid transparent;
}

.props-title {
    margin-left: 5px;
    margin-bottom: 3px;
    line-height: 12px;
    font-size: 11px;
    color: #444;
}

.prop-top {
    margin-top: 12px;
}

.h41 { height: 41px; }
.h42 { height: 42px; }
.h43 { height: 43px; }
.h44 { height: 44px; }
.h50 { height: 50px; }
.h52 { height: 52px; }

.prop-label {
    display: flex;
    height: 14px;
    padding-top: 1px;
    line-height: 14px;
    white-space: nowrap;
}

.help {
    margin-left: 3px;
    transform: translateY(-4px);
}

.textarea {
    width: 122px;
    height: 24px;
    margin: 2px 0 0 -2px;
    background-color: #fff;
    border: 1px solid #ccc;
    border-radius: 3px;
    display: flex;
    justify-content: flex-end;
    align-items: flex-end;
}

.select {
    display: inline-flex;
    align-items: center;
    height: 20px;
    margin: 1px 0 0 -2px;
    padding: 0 5px 0 3px;
    background-color: #fff;
    border: 1px solid #ccc;
    border-radius: 3px;
}

.select::after {
    content: "";
    margin-left: 5px;
    border-top: 3px solid #555;
    border-left: 2px solid transparent;
    border-right: 2px solid transparent;
}

.select-short {
    height: 19px;
}

.select-tight {
    height: 21px;
    margin-top: 0;
}

.color-row {
    display: flex;
    align-items: center;
    margin-top: 3px;
}

.swatch {
    width: 11px;
    height: 15px;
    margin: 0 8px 0 0;
    background-color: #fff;
    border: 1px solid #000;
}

.textinput {
    width: 132px;
    height: 22px;
    margin: 1px 0 0 -2px;
    padding-left: 6px;
    background-color: #fff;
    border: 1px solid #ccc;
    border-radius: 3px;
    font-size: 9px;
    line-height: 20px;
}

.textinput-title {
    height: 23px;
    margin-top: 2px;
    line-height: 21px;
}

.check {
    width: 12px;
    height: 12px;
    margin-top: 4px;
    background-color: #fff;
    border: 1px solid #888;
    border-radius: 2px;
}

.check-low {
    margin-top: 5px;
}

.check-low2 {
    margin-top: 6px;
}

.check-on {
    background-color: #777;
}

/* page scrollbar */
.scrollbar {
    justify-self: end;
    width: 15px;
    margin-top: 5px;
    background-color: #fff;
    display: flex;
    flex-direction: column;
    align-items: center;
}

.scroll-up,
.scroll-down {
    width: 0;
    height: 0;
    border-left: 4.5px solid transparent;
    border-right: 4.5px solid transparent;
}

.scroll-up {
    margin-top: 9px;
    border-bottom: 6px solid #777;
}

.scroll-thumb {
    width: 9px;
    height: 371px;
    margin-top: 74px;
    border-radius: 4.5px;
    background-color: #8f8f8f;
}

.scroll-down {
    margin-top: auto;
    margin-bottom: 9px;
    border-top: 6px solid #777;
}

.foot {
    height: 21px;
    flex: none;
    text-align: center;
    background-image: linear-gradient(#fbfbfb, #e6e6e6);
    box-shadow: 0 -1px 2px rgba(0, 0, 0, .12);
    position: relative;
    line-height: 20px;
}

.foot-link {
    color: #777;
}

/* right side bar of the browser */
.sidebar {
    width: 44px;
    height: 696px;
    padding: 1px 0 2px;
    display: flex;
    flex-direction: column;
    align-items: center;
}

.side-slot {
    width: 44px;
    height: 40px;
    flex: none;
    display: flex;
    align-items: center;
    justify-content: center;
}

.side-fill {
    flex: 1;
}

.side-sep {
    width: 28px;
    height: 1px;
    margin: 2px 0;
    background-color: #6f7c8f;
    flex: none;
}

.side-sep-top {
    margin: 14px 0 11px;
}

.taskbar {
    height: 2px;
    background-color: #202020;
    padding-left: 48px;
}

.taskbar-lit {
    display: block;
    height: 1px;
    background-color: #cfcfcf;
}
```
